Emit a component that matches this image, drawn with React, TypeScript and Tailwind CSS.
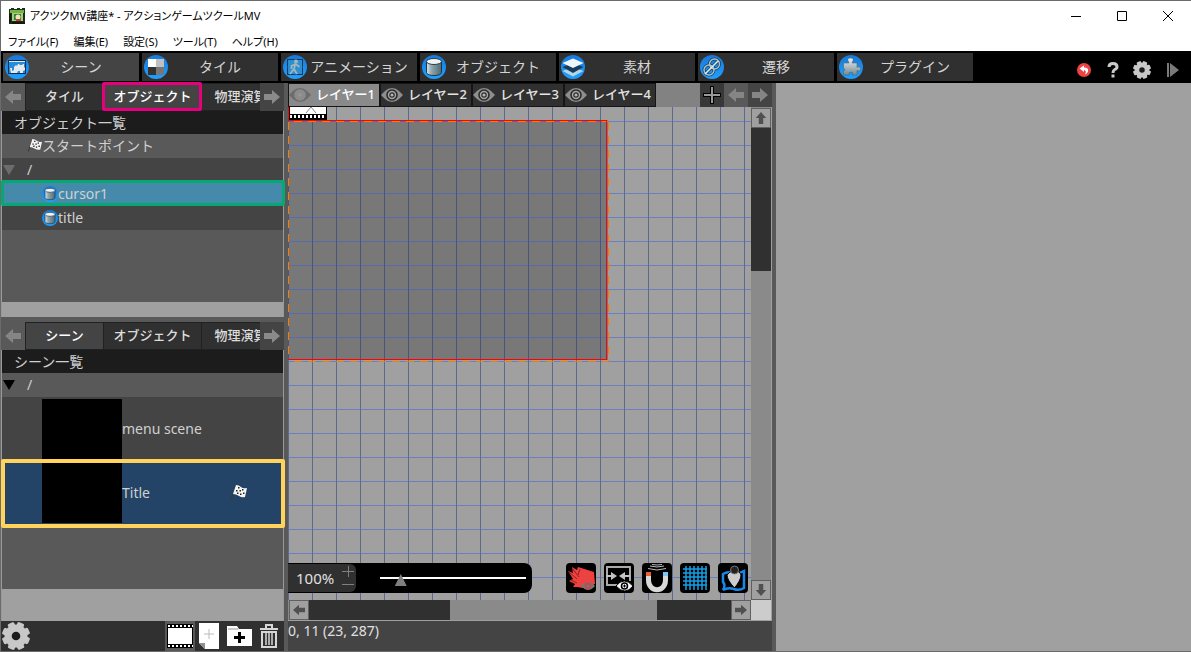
import React, { useState } from 'react';

type IconProps = { className?: string };

const ArrowIcon: React.FC<{ dir: 'left' | 'right' | 'up' | 'down'; className?: string }> = ({ dir, className }) => {
  const turn = { right: 0, down: 90, left: 180, up: 270 }[dir];
  return (
    <svg viewBox="0 0 16 16" className={className} fill="currentColor">
      <path transform={`rotate(${turn} 8 8)`} d="M0 5h8V1l8 7-8 7v-4H0z" />
    </svg>
  );
};

const GearIcon: React.FC<IconProps> = ({ className }) => (
  <svg viewBox="0 0 28 28" className={className}>
    <g fill="#c8c8c8">
      <circle cx="14" cy="14" r="11.5" />
      {[22, 67, 112, 157].map(a => (
        <rect key={a} x="10.5" y="0" width="7" height="28" rx="1.5" transform={`rotate(${a} 14 14)`} />
      ))}
    </g>
    <circle cx="14" cy="14" r="4.3" fill="#1c1c1c" />
  </svg>
);

const EyeIcon: React.FC<{ dim?: boolean }> = ({ dim }) => (
  <svg viewBox="0 0 22 16" className="h-4 w-[22px] shrink-0">
    <path d="M0 8 4 4Q7 1 11 1t7 3L22 8l-4 4Q15 15 11 15T4 12z" fill={dim ? '#6c6c6c' : '#8e8e8e'} />
    <circle cx="11" cy="8" r="5" fill={dim ? '#8c8c8c' : '#a8a8a8'} stroke={dim ? '#8c8c8c' : '#2b2b2b'} strokeWidth="1.6" />
    <circle cx="11" cy="8" r="2.2" fill={dim ? '#999' : '#b4b4b4'} stroke={dim ? '#8c8c8c' : '#2b2b2b'} strokeWidth="1.2" />
  </svg>
);

const FlagIcon: React.FC<IconProps> = ({ className }) => (
  <svg viewBox="0 0 16 16" className={className}>
    <path d="M5 1 0 15" stroke="#3a3a3a" strokeWidth="1.2" />
    <path d="M5 0q3 0 5 2t6 1l-2 9q-3 1-6-1T2 9z" fill="#f4f4f4" />
    <path d="M7 2h1.500v1.500H7zM11 4h1.500v1.500H11zM8.500 5H10v1.500H8.500zM5 5h1.500v1.500H5zM12 7.500h1.500V9H12zM9 8.500h1.500V10H9zM6 7.500h1.500V9H6z" fill="#222" />
  </svg>
);

const Disc: React.FC<{ children: React.ReactNode; className?: string }> = ({ children, className }) => (
  <svg viewBox="0 0 24 24" className={className ?? 'size-6 shrink-0'}>
    <defs>
      <linearGradient id="disc" x1="0" y1="0" x2="0" y2="1">
        <stop offset="0" stopColor="#1878d8" />
        <stop offset="1" stopColor="#20a0ff" />
      </linearGradient>
      <linearGradient id="steel" x1="0" y1="0" x2="0" y2="1">
        <stop offset="0" stopColor="#eef2f3" />
        <stop offset="1" stopColor="#74888f" />
      </linearGradient>
      <linearGradient id="barrel" x1="0" y1="0" x2="1" y2="0">
        <stop offset="0" stopColor="#dbe6e9" />
        <stop offset=".35" stopColor="#8fa3a9" />
        <stop offset="1" stopColor="#526870" />
      </linearGradient>
    </defs>
    <circle cx="12" cy="12" r="12" fill="url(#disc)" />
    {children}
  </svg>
);

const CylinderIcon: React.FC<IconProps> = ({ className }) => (
  <Disc className={className}>
    <path d="M4.500 6.500v11c0 4 15 4 15 0v-11z" fill="url(#barrel)" stroke="#123a54" strokeWidth="1" />
    <ellipse cx="12" cy="6.500" rx="7.500" ry="3" fill="#eef3f4" stroke="#24404c" strokeWidth="1" />
  </Disc>
);

const mainTabs = [
  {
    label: 'シーン',
    icon: (
      <Disc>
        <rect x="3.500" y="5.500" width="17" height="13" fill="#2a8cd8" stroke="#102e50" />
        <path d="M4 6.500h16" stroke="#dfe9ee" />
        <path d="M5 13h2v3l2-1v-3l2-2 1 1 1-2h1l1 1h2l1-1h1v3l1 1v2l-2 1v2h-3v-2h-2l-1 2H6z" fill="#e2eaec" />
      </Disc>
    ),
  },
  {
    label: 'タイル',
    icon: (
      <Disc>
        <path d="M4 4h8v8H4z" fill="#fff" />
        <path d="M12 4h8v8h-8z" fill="#c0c0c0" />
        <path d="M4 12h8v8H4z" fill="#333" />
        <path d="M12 12h8v8h-8z" fill="#777" />
      </Disc>
    ),
  },
  {
    label: 'アニメーション',
    icon: (
      <Disc>
        <rect x="4.500" y="4.500" width="15" height="15" fill="#2c8fd2" stroke="#123a5c" />
        <path d="M4 12h16M12 4v16" stroke="#3f7fa8" strokeWidth=".6" />
        <circle cx="13" cy="6.500" r="2" fill="#9fb6bf" />
        <path d="M12.500 8.500 11 14l3 5M11 14l-4 5M12.500 9l-4 2v3M12.500 9l4 3" stroke="#9fb6bf" strokeWidth="1.8" fill="none" />
      </Disc>
    ),
  },
  { label: 'オブジェクト', icon: <CylinderIcon /> },
  {
    label: '素材',
    icon: (
      <Disc>
        <path d="m1.500 16 10.500-4 10.500 4L12 21.500z" fill="#b4d4e6" />
        <path d="M1.500 12 12 8l10.500 4L12 18z" fill="#143c5e" />
        <path d="M1.500 8 12 3.500 22.500 8 12 13z" fill="#eef6fa" />
      </Disc>
    ),
  },
  {
    label: '遷移',
    icon: (
      <Disc>
        <g fill="none" stroke="#18405f" strokeWidth="3">
          <circle cx="14.500" cy="9" r="5" />
          <circle cx="9" cy="15" r="5" />
          <path d="M5 19 18 6" />
        </g>
        <g fill="none" stroke="#a9c5d2" strokeWidth="1.4">
          <circle cx="14.500" cy="9" r="5" />
          <circle cx="9" cy="15" r="5" />
          <path d="M5 19 18 6" stroke="#e4eef2" strokeWidth="1.6" />
        </g>
      </Disc>
    ),
  },
  {
    label: 'プラグイン',
    icon: (
      <Disc>
        <path
          d="M4.500 8h5.500q-3-5 1.500-5t1.500 5H18v4.500q1-1 2.500-.5 2 1 1 3t-3.500.5V20h-4.500q1-3-1.500-3t-2 3H4.500v-4q3-1 0-3z"
          fill="url(#steel)"
          stroke="#486876"
          strokeWidth=".6"
        />
      </Disc>
    ),
  },
];

const paneTabs = [
  { label: 'タイル', width: 'w-[78px]' },
  { label: 'オブジェクト', width: 'w-[98px]' },
  { label: '物理演算', width: 'w-[78px]' },
];

const sceneTabs = [
  { label: 'シーン', width: 'w-[78px]' },
  { label: 'オブジェクト', width: 'w-[98px]' },
  { label: '物理演算', width: 'w-[78px]' },
];

const layers = ['レイヤー1', 'レイヤー2', 'レイヤー3', 'レイヤー4'];
const menus = ['ファイル(F)', '編集(E)', '設定(S)', 'ツール(T)', 'ヘルプ(H)'];

const TitleBar: React.FC = () => (
  <header className="shrink-0 bg-white text-[11px] text-black [font-feature-settings:'palt']">
    <div className="flex h-[30px] items-center pl-2">
      <svg viewBox="0 0 16 16" className="size-4">
        <path d="M0 1h2V0h3v1h3V0h3v1h2V0h3v16H0z" fill="#1b2f1c" />
        <path d="M1 2h14v3H1z" fill="#78b048" />
        <path d="M3 5h11v8H3z" fill="#a8cf70" />
        <path d="M5 6h7v6H5z" fill="#2f7f46" />
        <circle cx="9" cy="9" r="2.500" fill="#f0e4c0" />
        <path d="M7 11h5v2H7z" fill="#b8442c" />
        <path d="M0 6h2v9H0zM3 14h13v2H3z" fill="#17170f" />
      </svg>
      <h1 className="ml-[5px] flex-1">アクツクMV講座* - アクションゲームツクールMV</h1>
      <button aria-label="最小化" className="flex h-full w-[46px] items-center justify-center">
        <svg viewBox="0 0 10 10" className="size-[10px]" stroke="#000"><path d="M0 5.500h10" /></svg>
      </button>
      <button aria-label="最大化" className="flex h-full w-[46px] items-center justify-center">
        <svg viewBox="0 0 10 10" className="size-[10px]" stroke="#000" fill="none"><path d="M.5.5h9v9h-9z" /></svg>
      </button>
      <button aria-label="閉じる" className="flex h-full w-[46px] items-center justify-center">
        <svg viewBox="0 0 10 10" className="size-[10px]" stroke="#000"><path d="m0 0 10 10M10 0 0 10" /></svg>
      </button>
    </div>
    <nav className="flex h-5 items-center gap-[15px] pt-0.5 pl-[7px]">
      {menus.map(m => (
        <button key={m}>{m}</button>
      ))}
    </nav>
  </header>
);

const MainToolbar: React.FC = () => {
  const [active, setActive] = useState('シーン');
  return (
    <div className="flex h-8 shrink-0 items-center bg-black pl-0.5">
      <div className="flex gap-[3px]">
        {mainTabs.map(t => (
          <button
            key={t.label}
            onClick={() => setActive(t.label)}
            className={`flex h-7 w-[136px] items-center pr-1.5 pl-0.5 text-sm text-[#d4d4d4] ${active === t.label ? 'bg-[#444]' : 'bg-[#303030]'}`}
          >
            {t.icon}
            <span className="flex-1 whitespace-nowrap">{t.label}</span>
          </button>
        ))}
      </div>
      <div className="ml-auto flex items-center pt-1.5 pr-3">
        <button aria-label="元に戻す">
          <svg viewBox="0 0 14 14" className="size-[14px]">
            <circle cx="7" cy="7" r="7" fill="#ee4340" />
            <path d="m2.500 5.500 4.500-3v2q5 0 4 4-.5 2-3 3 2-4-1-4.500v2z" fill="#fff" />
          </svg>
        </button>
        <button aria-label="ヘルプ" className="mr-2.5 ml-3 flex w-5 justify-center">
          <svg viewBox="0 0 12 16" className="h-4 w-3" fill="none" stroke="#c8c8c8" strokeWidth="3">
            <path d="M2 5q0-3.500 4-3.500t4 3.200q0 2-2.500 3Q6 8.500 6 11M6 12.500v3" />
          </svg>
        </button>
        <button aria-label="設定"><GearIcon className="size-[18px]" /></button>
        <button aria-label="再生" className="ml-4">
          <svg viewBox="0 0 12 14" className="h-[14px] w-3" fill="#7a7a7a">
            <path d="M0 0h2v14H0zM3 0l9 7-9 7z" />
          </svg>
        </button>
      </div>
    </div>
  );
};

const PaneTabs: React.FC<{ tabs: typeof paneTabs; selected: number; marked?: number }> = ({ tabs, selected, marked }) => (
  <div className="flex h-7 shrink-0 bg-[#444]">
    <button aria-label="前のタブ" className="flex w-6 shrink-0 items-center justify-center bg-[#595959] text-[#858585]">
      <ArrowIcon dir="left" className="size-4" />
    </button>
    <div className="flex min-w-0 flex-1 overflow-x-clip">
      {tabs.map((t, i) => (
        <button
          key={t.label}
          className={`${t.width} relative shrink-0 border-y border-l border-[#1e2222] text-[13px] font-medium whitespace-nowrap ${i === selected ? 'bg-[#444] text-white' : 'bg-[#303030] text-[#dcdcdc]'}`}
        >
          {t.label}
          {i === marked && (
            <span className="absolute -top-0.5 -right-px -bottom-px -left-0.5 z-10 rounded-xs border-3 border-[#e6007e]" />
          )}
        </button>
      ))}
    </div>
    <button aria-label="次のタブ" className="flex w-6 shrink-0 items-center justify-center bg-[#444] text-[#8a8a8a]">
      <ArrowIcon dir="right" className="size-4" />
    </button>
  </div>
);

const ObjectPane: React.FC = () => (
  <section className="flex h-[234px] shrink-0 flex-col">
    <PaneTabs tabs={paneTabs} selected={1} marked={1} />
    <div className="flex flex-1 flex-col border-x border-[#999] bg-[#595959] text-sm text-[#d0d0d0]">
      <h2 className="h-[23px] bg-[#1c1c1c] pl-3 leading-[23px]">オブジェクト一覧</h2>
      <ul className="flex-1">
        <li className="flex h-6 items-center pl-[26px]">
          <FlagIcon className="size-[14px]" />
          スタートポイント
        </li>
        <li className="flex h-6 items-center bg-[#444] pl-px">
          <svg viewBox="0 0 12 10" className="h-[10px] w-3" fill="#6c6c6c"><path d="M0 0h12L6 10z" /></svg>
          <span className="ml-3">/</span>
        </li>
        <li className="relative flex h-6 items-center bg-[#468aab] pl-10">
          <CylinderIcon className="size-4" />
          cursor1
          <span className="absolute -top-0.5 -right-0.5 bottom-0 -left-px rounded-xs border-3 border-[#05a870]" />
        </li>
        <li className="flex h-6 items-center bg-[#444] pl-10">
          <CylinderIcon className="size-4" />
          title
        </li>
      </ul>
      <div className="h-[15px] bg-[#a0a0a0]" />
    </div>
  </section>
);

const ScenePane: React.FC = () => (
  <section className="flex min-h-0 flex-1 flex-col border-t-5 border-[#595959]">
    <PaneTabs tabs={sceneTabs} selected={0} />
    <div className="flex flex-1 flex-col border-x border-[#999] bg-[#595959] text-sm text-[#d0d0d0]">
      <h2 className="h-[23px] bg-[#1c1c1c] pl-3 leading-[23px]">シーン一覧</h2>
      <ul className="flex-1">
        <li className="flex h-6 items-center pl-px">
          <svg viewBox="0 0 12 10" className="h-[10px] w-3" fill="#000"><path d="M0 0h12L6 10z" /></svg>
          <span className="ml-3">/</span>
        </li>
        <li className="flex h-16 items-center bg-[#444] pl-10">
          <div className="h-[60px] w-20 bg-black" />
          menu scene
        </li>
        <li className="relative flex h-16 items-center bg-[#234466] pl-10">
          <div className="h-[60px] w-20 bg-black" />
          Title
          <FlagIcon className="mr-9 ml-auto size-4" />
          <span className="absolute -top-0.5 -right-0.5 -bottom-[3px] -left-px rounded-xs border-4 border-[#ffd35c]" />
        </li>
      </ul>
      <div className="h-8 bg-[#a0a0a0]" />
    </div>
    <div className="flex h-[30px] shrink-0 items-center bg-[#303030]">
      <button aria-label="シーン設定" className="ml-px"><GearIcon className="size-7" /></button>
      <div className="ml-auto flex h-full items-center pr-[5px]">
        <button aria-label="シーン" className="mr-1 flex h-full w-[30px] items-center justify-center bg-[#595959]">
          <svg viewBox="0 0 26 24" className="h-6 w-[26px]">
            <path d="M0 0h26v24H0z" fill="#000" />
            <path d="M1 4h24v16H1z" fill="#fff" />
            <path d="M1 2h25M1 22h25" stroke="#fff" strokeWidth="2" strokeDasharray="2 2" />
          </svg>
        </button>
        <button aria-label="シーンを追加" className="mr-2">
          <svg viewBox="0 0 20 26" className="h-[26px] w-5">
            <path d="M0 0h20v26H6l-6-6z" fill="#fff" />
            <path d="M0 20h6v6z" fill="#909090" />
            <path d="M10 6v10M5 11h10" stroke="#bbb" />
          </svg>
        </button>
        <button aria-label="フォルダを追加" className="mr-[7px]">
          <svg viewBox="0 0 25 20" className="h-5 w-[25px]">
            <path d="M0 0h10l2 3h13v17H0z" fill="#fff" />
            <path d="M1 3h10" stroke="#999" />
            <path d="M12.500 6v11M7 11.500h11" stroke="#000" strokeWidth="3" />
          </svg>
        </button>
        <button aria-label="削除">
          <svg viewBox="0 0 20 24" className="h-6 w-5" fill="none" stroke="#d6d6d6" strokeWidth="2">
            <path d="M1 5h18M7 4V1h6v3M3 8v15h14V8z" />
            <path d="M7 9v12M10 9v12M13 9v12" strokeWidth="1.500" />
          </svg>
        </button>
      </div>
    </div>
  </section>
);

const LayerTabs: React.FC = () => {
  const [current, setCurrent] = useState(0);
  return (
    <div className="flex h-6 shrink-0 bg-[#828282]">
      <div className="flex gap-0.5 bg-[#151515] p-px">
        {layers.map((name, i) => (
          <button
            key={name}
            onClick={() => setCurrent(i)}
            className={`flex w-[90px] items-center gap-[5px] text-[13px] font-medium whitespace-nowrap ${i === current ? 'bg-[#8a8a8a] text-white' : 'bg-[#303030] text-[#e4e4e4]'}`}
          >
            <EyeIcon dim={i === current} />
            {name}
          </button>
        ))}
      </div>
      <div className="ml-auto flex">
        <button aria-label="レイヤーを追加" className="flex w-6 items-center justify-center bg-[#383838]">
          <svg viewBox="0 0 18 18" className="size-[18px]">
            <path d="M9 0v18M0 9h18" stroke="#000" strokeWidth="4" />
            <path d="M9 1v16M1 9h16" stroke="#999" strokeWidth="2" />
          </svg>
        </button>
        <button aria-label="前のレイヤー" className="flex w-6 items-center justify-center bg-[#595959] text-[#858585]">
          <ArrowIcon dir="left" className="size-4" />
        </button>
        <button aria-label="次のレイヤー" className="flex w-6 items-center justify-center bg-[#444] text-[#858585]">
          <ArrowIcon dir="right" className="size-4" />
        </button>
      </div>
    </div>
  );
};

const SceneCanvas: React.FC = () => (
  <>
    <div className="absolute top-[13px] left-0 h-60 w-80 bg-[#787878]" />
    <div className="absolute inset-0 bg-[linear-gradient(90deg,#1c3480_1px,transparent_1px),linear-gradient(#3c60d8_1px,transparent_1px)] bg-[size:24px_24px] bg-[position:0_14px] opacity-50" />
    <svg className="absolute inset-0 size-full" shapeRendering="crispEdges">
      <g fill="none" stroke="#ff7800" strokeDasharray="8 6">
        <path d="M.5 15v238M6 14.500h314M6 254.500h314" />
        <path d="M320.500 15v240" />
      </g>
      <path d="M.5 0v13.500h318v239H0" fill="none" stroke="#f00" />
      {/* scene camera thumbnail */}
      <path d="M1 0h38v13H1z" fill="#000" />
      <path d="M2 0h36v7H2z" fill="#fff" />
      <path d="M2 9.500h36" stroke="#fff" strokeWidth="3" strokeDasharray="2 2" />
      <path d="m18 6 5-6 5 6" fill="none" stroke="#888" shapeRendering="auto" />
    </svg>
  </>
);

const toolButton = 'flex size-[30px] items-center justify-center rounded-sm bg-black';

const CanvasControls: React.FC = () => {
  const [zoom, setZoom] = useState(11);
  return (
    <div className="absolute right-[3px] bottom-[7px] left-0 flex items-center justify-between">
      <div className="flex h-[30px] w-[244px] items-center rounded-r-lg bg-black">
        <div className="flex h-7 w-[68px] items-center rounded-r-md bg-[#303030]">
          <input
            aria-label="表示倍率"
            defaultValue="100%"
            className="w-[54px] bg-transparent pl-2 text-[15px] text-[#e0e0e0] outline-none"
          />
          <div className="flex flex-col text-[#808080]">
            <button aria-label="拡大">
              <svg viewBox="0 0 12 12" className="size-3" stroke="currentColor"><path d="M6.500 0v11M0 5.500h12" /></svg>
            </button>
            <button aria-label="縮小">
              <svg viewBox="0 0 12 12" className="size-3" stroke="currentColor"><path d="M0 6.500h12" /></svg>
            </button>
          </div>
        </div>
        <input
          type="range"
          aria-label="ズーム"
          value={zoom}
          onChange={e => setZoom(Number(e.target.value))}
          className="ml-6 h-0.5 w-[146px] appearance-none bg-white [&::-webkit-slider-thumb]:mt-1 [&::-webkit-slider-thumb]:h-3 [&::-webkit-slider-thumb]:w-3 [&::-webkit-slider-thumb]:appearance-none [&::-webkit-slider-thumb]:bg-[#808080] [&::-webkit-slider-thumb]:[clip-path:polygon(50%_0,100%_100%,0_100%)]"
        />
      </div>
      <div className="flex gap-2">
        <button aria-label="当たり判定" className={toolButton}>
          <svg viewBox="0 0 30 30" className="size-[30px]">
            <path d="m2 8 5 2-1-6 5 3 1-3 16 5 1 12-12 4-6-1-4 0 2-3-6-3 4-2z" fill="#ee4240" />
            <path d="m6 5 7 9M3 9l8 7M14 6l-2 6M5 17l6 3" stroke="#8e2020" fill="none" />
            <path d="M15 23q7-8 14 0-7 8-14 0z" fill="#767676" />
            <circle cx="22" cy="23" r="2.500" fill="none" stroke="#d84040" strokeWidth="1.500" />
          </svg>
        </button>
        <button aria-label="接続表示" className={toolButton}>
          <svg viewBox="0 0 30 30" className="size-[30px]">
            <path d="M14 22H3V4h23v14" fill="none" stroke="#aaa" strokeWidth="2" />
            <path d="M2 12h5V9l6 4-6 4v-3H2zM26 12h-5V9l-6 4 6 4v-3h5z" fill="#c4c4c4" />
            <path d="M12 23q8-10 17 0-8 10-17 0z" fill="#fff" stroke="#000" />
            <circle cx="20.500" cy="23" r="3" fill="#fff" stroke="#000" strokeWidth="1.600" />
            <path d="M20.500 21.500v3M19 23h3" stroke="#000" />
          </svg>
        </button>
        <button aria-label="スナップ" className={toolButton}>
          <svg viewBox="0 0 30 30" className="size-[30px]" fill="none">
            <path d="M6.500 13v4c0 13 17 13 17 0v-4" stroke="#d8d8d8" strokeWidth="5" />
            <path d="M4 9h5v4H4z" fill="#e86030" />
            <path d="M21 9h5v4h-5z" fill="#78c8f8" />
            <path d="M8 3q7 2 14 0M6 5.500q9 3 18 0M10 1.500q5 1 10 0" stroke="#bbb" />
          </svg>
        </button>
        <button aria-label="グリッド" className={toolButton}>
          <svg viewBox="0 0 30 30" className="size-[30px]" stroke="#169ee6" strokeWidth="1.500">
            <path d="M6 3v24M10 3v24M14 3v24M18 3v24M22 3v24M26 3v24M3 6h24M3 10h24M3 14h24M3 18h24M3 22h24" />
          </svg>
        </button>
        <button aria-label="マップ" className={toolButton}>
          <svg viewBox="0 0 30 30" className="size-[30px]">
            <path d="M5 11q5-3 9-1t12-2v17q-5 3-10 1-6-2-11 1 3-5 0-8z" fill="none" stroke="#1888e8" strokeWidth="2.500" />
            <path d="M9 12q2-4 7.500-4t6.500 4q0 5-6.500 13Q9 17 9 12z" fill="#ccc" stroke="#000" />
            <circle cx="16.500" cy="7" r="4" fill="#222" stroke="#777" />
          </svg>
        </button>
      </div>
    </div>
  );
};

const scrollButton = 'flex size-5 shrink-0 items-center justify-center border border-[#606060] bg-[#a0a0a0] text-[#505050]';

const Workspace: React.FC = () => (
  <main className="flex min-w-0 flex-col">
    <LayerTabs />
    <div className="grid min-h-0 flex-1 grid-cols-[1fr_20px] grid-rows-[1fr_20px] border-r border-b border-[#a0a0a0]">
      <div className="relative overflow-hidden bg-[#a0a0a0]">
        <SceneCanvas />
        <CanvasControls />
      </div>
      <div className="flex flex-col bg-[#8a8a8a] pt-px">
        <button aria-label="上へ" className={scrollButton}><ArrowIcon dir="up" className="size-3" /></button>
        <div className="h-[143px] bg-[#303030]" />
        <button aria-label="下へ" className={`${scrollButton} mt-auto`}><ArrowIcon dir="down" className="size-3" /></button>
      </div>
      <div className="flex bg-[#8a8a8a] pl-px">
        <button aria-label="左へ" className={scrollButton}><ArrowIcon dir="left" className="size-3" /></button>
        <div className="w-[141px] bg-[#303030]" />
        <div className="ml-auto w-[74px] bg-[#303030]" />
        <button aria-label="右へ" className={scrollButton}><ArrowIcon dir="right" className="size-3" /></button>
      </div>
      <div className="bg-[#ccc]" />
    </div>
    <footer className="h-[30px] bg-[#444] text-sm leading-5 text-[#e0e0e0]">0, 11 (23, 287)</footer>
  </main>
);

const App: React.FC = () => (
  <div className="flex h-screen w-full flex-col overflow-hidden border-t border-b border-l border-[#6b6b6b] bg-[#a0a0a0] font-['Noto_Sans','Noto_Sans_CJK_JP',sans-serif]">
    <TitleBar />
    <MainToolbar />
    <div className="grid min-h-0 flex-1 grid-cols-[283px_4px_484px_4px_1fr]">
      <aside className="relative z-10 flex min-h-0 flex-col">
        <ObjectPane />
        <ScenePane />
      </aside>
      <div className="bg-[#595959]" />
      <Workspace />
      <div className="bg-[#595959]" />
      <div className="bg-[#a0a0a0]" />
    </div>
  </div>
);

export default App;
